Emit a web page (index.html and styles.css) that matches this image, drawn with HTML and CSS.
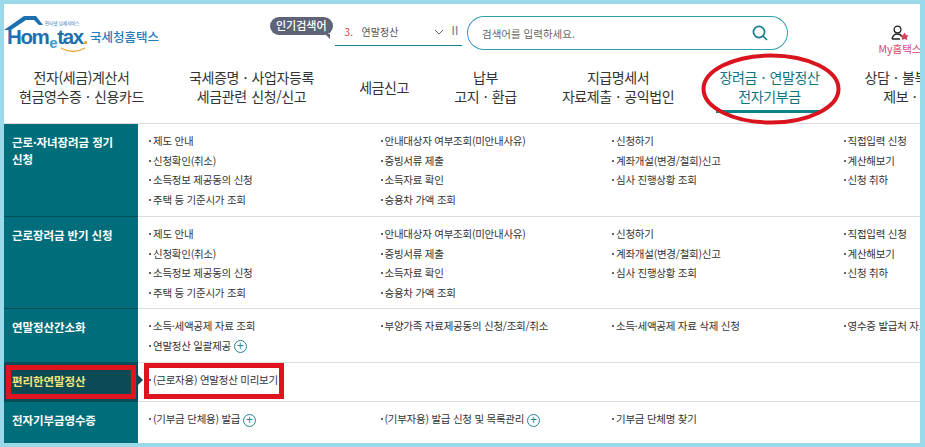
FILE: index.html
```html
<!DOCTYPE html>
<html lang="ko">
<head>
<meta charset="utf-8">
<title>국세청 홈택스</title>
<link rel="stylesheet" href="styles.css">
</head>
<body>
<div class="frame">
  <header class="top">
    <a class="logo">
      <svg class="roof" viewBox="0 0 40 15" width="40" height="15"><path d="M0 14 L20 0 L32 0 L39 9 L35 9 L30 4 L22 4 L7 14 Z" fill="#1e6fae"/></svg>
      <span class="logo-small">인터넷 납세서비스</span>
      <span class="logo-word">Hom<i>e</i>tax<b>.</b></span>
      <svg class="smile" viewBox="0 0 26 6" width="26" height="6"><path d="M1 1 Q13 8 25 1" fill="none" stroke="#e9a93a" stroke-width="1.4"/></svg>
      <span class="logo-kr">국세청홈택스</span>
    </a>
    <div class="popular">
      <span class="bubble">인기검색어</span>
      <div class="rank">
        <span class="rank-n">3.</span><span class="rank-t">연말정산</span>
        <svg class="chev" viewBox="0 0 10 6" width="10" height="6"><path d="M1 1 L5 5 L9 1" fill="none" stroke="#667" stroke-width="1"/></svg>
        <span class="pause">II</span>
      </div>
    </div>
    <div class="search">
      <span class="ph">검색어를 입력하세요.</span>
      <svg viewBox="0 0 16 16" width="16" height="16"><circle cx="7" cy="7" r="5.6" fill="none" stroke="#15818c" stroke-width="1.7"/><path d="M11 11 L15 15" stroke="#15818c" stroke-width="1.7"/></svg>
    </div>
    <div class="my">
      <svg viewBox="0 0 18 16" width="18" height="16"><circle cx="6.5" cy="4.5" r="3.4" fill="none" stroke="#222" stroke-width="1.3"/><path d="M1 14 Q2 9 6.5 9 Q10 9 11 12 M1 14 H9" fill="none" stroke="#222" stroke-width="1.3"/><path d="M13.5 7.5 L15 10 L17.5 10.5 L16 12.5 L16.2 15 L13.5 14 L10.8 15 L11 12.5 L9.5 10.5 L12 10 Z" fill="#d8425f"/></svg>
      <span>My홈택스</span>
    </div>
  </header>

  <nav class="gnb">
    <a>전자(세금)계산서<br>현금영수증 · 신용카드</a>
    <a>국세증명 · 사업자등록<br>세금관련 신청/신고</a>
    <a>세금신고</a>
    <a>납부<br>고지 · 환급</a>
    <a>지급명세서<br>자료제출 · 공익법인</a>
    <a class="on">장려금 · 연말정산<br>전자기부금</a>
    <a>상담 · 불복 · 고충<br>제보 · 기타</a>
  </nav>

  <main class="menu">
    <section class="row r1">
      <h3>근로·자녀장려금 정기<br>신청</h3>
      <ul>
        <li>제도 안내</li><li>안내대상자 여부조회(미안내사유)</li><li>신청하기</li><li>직접입력 신청</li>
        <li>신청확인(취소)</li><li>증빙서류 제출</li><li>계좌개설(변경/철회)신고</li><li>계산해보기</li>
        <li>소득정보 제공동의 신청</li><li>소득자료 확인</li><li>심사 진행상황 조회</li><li>신청 취하</li>
        <li>주택 등 기준시가 조회</li><li>승용차 가액 조회</li>
      </ul>
    </section>
    <section class="row r2">
      <h3>근로장려금 반기 신청</h3>
      <ul>
        <li>제도 안내</li><li>안내대상자 여부조회(미안내사유)</li><li>신청하기</li><li>직접입력 신청</li>
        <li>신청확인(취소)</li><li>증빙서류 제출</li><li>계좌개설(변경/철회)신고</li><li>계산해보기</li>
        <li>소득정보 제공동의 신청</li><li>소득자료 확인</li><li>심사 진행상황 조회</li><li>신청 취하</li>
        <li>주택 등 기준시가 조회</li><li>승용차 가액 조회</li>
      </ul>
    </section>
    <section class="row r3">
      <h3>연말정산간소화</h3>
      <ul>
        <li>소득·세액공제 자료 조회</li><li>부양가족 자료제공동의 신청/조회/취소</li><li>소득·세액공제 자료 삭제 신청</li><li>영수증 발급처 자료제출</li>
        <li>연말정산 일괄제공 <span class="plus">+</span></li>
      </ul>
    </section>
    <section class="row r4 active">
      <h3>편리한연말정산</h3>
      <ul>
        <li>(근로자용) 연말정산 미리보기</li>
      </ul>
    </section>
    <section class="row r5">
      <h3>전자기부금영수증</h3>
      <ul>
        <li>(기부금 단체용) 발급 <span class="plus">+</span></li><li>(기부자용) 발급 신청 및 목록관리 <span class="plus">+</span></li><li>기부금 단체명 찾기</li>
      </ul>
    </section>
  </main>

  <svg class="ellipse" viewBox="0 0 140 72" width="140" height="72"><ellipse cx="70" cy="36" rx="67.5" ry="33.5" fill="none" stroke="#d9141f" stroke-width="4"/></svg>
  <div class="mark mark-a"></div>
  <div class="mark mark-b"></div>
</div>
</body>
</html>
```
FILE: styles.css
```css
* { box-sizing: border-box; }
html, body { margin: 0; padding: 0; }
body {
  width: 925px;
  height: 447px;
  overflow: hidden;
  background: #fff;
  font-family: "Noto Sans CJK KR", "Noto Sans", sans-serif;
  color: #333;
}
.frame {
  position: relative;
  width: 925px;
  height: 447px;
  overflow: hidden;
  border: solid #9ad9ea;
  border-width: 4px 5px 4px 4px;
}
/* header */
.top {
  display: flex;
  align-items: flex-start;
  height: 58px;
  width: 930px;
}
.logo {
  position: relative;
  display: block;
  width: 262px;
  height: 58px;
  flex: none;
}
.roof { position: absolute; left: 0; top: 12px; }
.logo-small { position: absolute; left: 41px; top: 16px; font-size: 4.5px; line-height: 6px; color: #1e6fae; white-space: nowrap; }
.logo-word {
  position: absolute; left: 3px; top: 19px;
  font: bold 20.5px/28px "Liberation Sans", sans-serif;
  letter-spacing: -1.4px;
  color: #1e6fae;
  white-space: nowrap;
}
.logo-word i { font-style: normal; font-size: 15px; position: relative; top: 4px; color: #3f9bcf; margin: 0 1px; }
.logo-word b { color: #e9a93a; }
.smile { position: absolute; left: 56px; top: 43px; }
.logo-kr { position: absolute; left: 86px; top: 24px; font-size: 12.5px; line-height: 18px; font-weight: 500; color: #2a7ab8; white-space: nowrap; }
.popular { display: flex; flex: none; width: 195px; margin-left: 4px; padding-top: 13px; }
.bubble {
  height: 18px;
  line-height: 17px;
  padding: 0 6px;
  margin-right: 2px;
  background: #5f6378;
  color: #fff;
  font-size: 11px;
  font-weight: 500;
  border-radius: 9px;
  white-space: nowrap;
  flex: none;
  position: relative;
}
.bubble::after {
  content: "";
  position: absolute;
  right: 3px; bottom: -4px;
  border-left: 5px solid transparent;
  border-top: 5px solid #5f6378;
}
.rank {
  display: flex;
  align-items: center;
  width: 127px;
  height: 29px;
  padding: 0 0 0 10px;
  border-bottom: 1px solid #15818c;
  font-size: 10px;
  flex: none;
}
.rank-n { color: #d9444a; width: 17px; }
.rank-t { color: #555; width: 72px; }
.chev { margin-right: 8px; margin-top: 2px; }
.pause { color: #777; font-family: "Liberation Sans", sans-serif; font-size: 12px; }
.search {
  display: flex;
  align-items: center;
  justify-content: space-between;
  width: 321px;
  height: 34px;
  margin-top: 12px;
  margin-left: 2px;
  padding: 0 19px 0 14px;
  border: 1px solid #2f9fae;
  border-left-color: #4a8fd0;
  border-radius: 17px;
  flex: none;
}
.ph { font-size: 10.5px; color: #666; }
.my {
  display: flex;
  flex-direction: column;
  align-items: center;
  gap: 1px;
  width: 60px;
  margin-left: 82px;
  padding-top: 21px;
  flex: none;
  color: #d8486a;
  font-size: 10.5px;
  line-height: 13px;
  white-space: nowrap;
}
/* nav */
.gnb {
  display: flex;
  align-items: center;
  gap: 45.2px;
  height: 62px;
  width: 1020px;
  padding: 0 0 11px 15px;
  border-bottom: 1px solid #ddd;
}
.gnb a {
  flex: none;
  position: relative;
  align-self: stretch;
  display: flex;
  align-items: center;
  text-align: center;
  font-size: 14px;
  line-height: 19px;
  letter-spacing: -0.4px;
  word-spacing: 1px;
  color: #333;
}
.gnb a.on { color: #0e7580; }
.gnb a.on::after {
  content: "";
  position: absolute;
  left: -3px; right: -3px;
  bottom: -1px;
  height: 3px;
  background: #0e8088;
}
/* menu */
.menu { width: 1000px; }
.row {
  display: flex;
  border-bottom: 1px solid #ddd;
}
.row:last-child { border-bottom: 0; }
.r1 { height: 93px; }
.r2 { height: 92px; }
.r3 { height: 54px; }
.r4 { height: 39px; }
.r5 { height: 41px; }
.row h3 {
  flex: none;
  width: 134px;
  margin: 0 0 -1px;
  padding: 10px 0 0 8px;
  background: #006d7a;
  color: #fff;
  font-size: 11.5px;
  line-height: 17px;
  letter-spacing: -0.1px;
  font-weight: 700;
  border-bottom: 1px solid #00505b;
}
.row.active h3 { background: #0d4a55; color: #f2e27a; position: relative; }
.row.active h3::after {
  content: "";
  position: absolute;
  right: -5px; top: 12px;
  border-top: 5px solid transparent;
  border-bottom: 5px solid transparent;
  border-left: 5px solid #0d4a55;
}
.row ul {
  flex: none;
  display: grid;
  grid-template-columns: repeat(4, 231.5px);
  grid-auto-rows: 19.7px;
  align-content: start;
  margin: 0;
  padding: 7px 0 0 10px;
  list-style: none;
}
.row li {
  font-size: 10.5px;
  line-height: 19.7px;
  letter-spacing: -0.25px;
  color: #333;
  white-space: nowrap;
  padding-left: 5px;
  position: relative;
}
.row li::before {
  content: "";
  position: absolute;
  left: 1px; top: 9px;
  width: 2px; height: 2px;
  background: #666;
}
.plus {
  display: inline-block;
  width: 13px;
  height: 13px;
  border: 1px solid #2a8390;
  border-radius: 50%;
  text-align: center;
  color: #2a8390;
  font: 12px/11px "Liberation Sans", sans-serif;
  vertical-align: middle;
}
/* annotations drawn over the screenshot */
.ellipse { position: absolute; left: 697px; top: 49px; }
.mark { position: absolute; border: 5px solid #e0141f; }
.mark-a { left: 2px; top: 361px; width: 130px; height: 34px; }
.mark-b { left: 140px; top: 359px; width: 140px; height: 36px; }
```
